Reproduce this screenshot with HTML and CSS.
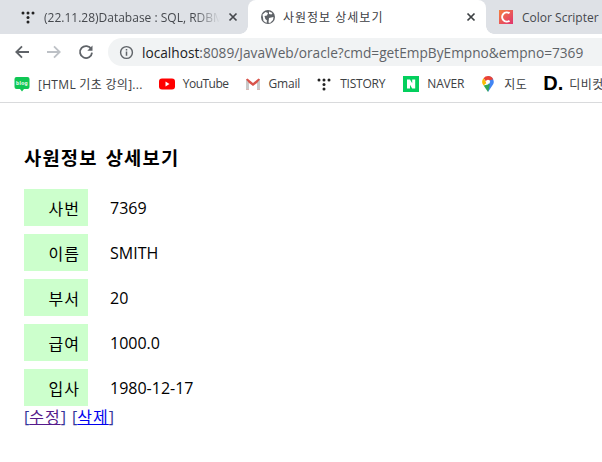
FILE: index.html
```html
<!DOCTYPE html>
<html lang="ko">
<head>
<meta charset="utf-8">
<title>사원정보 상세보기</title>
<link rel="stylesheet" href="styles.css">
</head>
<body>
<header class="browser">
  <div class="tabs">
    <div class="tab first">
      <svg class="fav" viewBox="0 0 16 16"><g fill="#222"><circle cx="3" cy="4" r="1.5"/><circle cx="8" cy="4" r="1.5"/><circle cx="13" cy="4" r="1.5"/><circle cx="8" cy="8.5" r="1.5"/><circle cx="8" cy="13" r="1.5"/></g></svg>
      <span class="tab-title fade">(22.11.28)Database : SQL, RDBMS</span>
      <svg class="close" viewBox="0 0 10 10"><path d="M1.5 1.5l7 7M8.5 1.5l-7 7" stroke="#45484d" stroke-width="1.7" fill="none"/></svg>
    </div>
    <div class="tab active">
      <svg class="fav" viewBox="0 0 16 16"><circle cx="8" cy="8" r="7" fill="#5f6368"/><path d="M2.500 5.500l3-2.500 2.500 1-1 2.500-2.500.5.800 3 1.700 1.500-.5 2.500-3-2zM9 2.500l3.500 1.500-1 1.500-2.500-.5zM9 9l4.500-1-.5 3-3 3-1.500-.5z" fill="#fff"/></svg>
      <span class="tab-title ko">사원정보 상세보기</span>
      <svg class="close" viewBox="0 0 10 10"><path d="M1.500 1.500l7 7M8.500 1.500l-7 7" stroke="#3c4043" stroke-width="1.700" fill="none"/></svg>
    </div>
    <div class="tab last">
      <svg class="fav" viewBox="0 0 16 16"><defs><linearGradient id="cs" x1="0" y1="0" x2="1" y2="1"><stop offset="0" stop-color="#f4813f"/><stop offset="1" stop-color="#e0336f"/></linearGradient></defs><rect x="1" y="1" width="14" height="14" fill="url(#cs)"/><path d="M11.500 4.300A4.600 4.600 0 1 0 11.500 11.700" stroke="#fff" stroke-width="2" fill="none"/></svg>
      <span class="tab-title">Color Scripter</span>
    </div>
  </div>
  <div class="toolbar">
    <svg class="nav" viewBox="0 0 16 16"><path d="M15 8H2.500M8 2.300L2.300 8 8 13.700" stroke="#5f6368" stroke-width="1.800" fill="none"/></svg>
    <svg class="nav" viewBox="0 0 16 16"><path d="M1 8h12.500M8 2.300L13.700 8 8 13.700" stroke="#bdc1c6" stroke-width="1.800" fill="none"/></svg>
    <svg class="nav" viewBox="0 0 16 16"><path d="M13.300 5.200A6 6 0 1 0 14 8.600" stroke="#5f6368" stroke-width="1.800" fill="none"/><path d="M14.500 1.500v5.200H9.300z" fill="#5f6368"/></svg>
    <div class="omnibox">
      <svg class="info" viewBox="0 0 16 16"><circle cx="8" cy="8" r="6.300" stroke="#5f6368" stroke-width="1.500" fill="none"/><path d="M7.200 7h1.600v4.500H7.200zM7.200 4.300h1.600v1.600H7.200z" fill="#5f6368"/></svg>
      <span class="url"><span class="host">localhost</span>:8089/JavaWeb/oracle?cmd=getEmpByEmpno&amp;empno=7369</span>
    </div>
  </div>
  <nav class="bookmarks">
    <a class="bm ko first-bm"><svg class="fav" viewBox="0 0 16 16"><path d="M2.500 1h11A2 2 0 0 1 15.500 3v8a2 2 0 0 1-2 2H10l-2 2.500L6 13H2.500a2 2 0 0 1-2-2V3a2 2 0 0 1 2-2z" fill="#0fc754"/><text x="8" y="9.300" class="blog">blog</text></svg>[HTML 기초 강의]...</a>
    <a class="bm narrow"><svg class="fav" viewBox="0 0 16 16"><rect y="2.500" width="16" height="11" rx="3" fill="#f00"/><path d="M6.500 5.500v5l4-2.500z" fill="#fff"/></svg>YouTube</a>
    <a class="bm"><svg class="fav" viewBox="0 0 16 16"><path d="M1 3.500v10h3V7l4 3 4-3v6.500h3v-10l-1.500-1L8 7 2.500 2.500z" fill="#d9534a"/><path d="M4 7v6.500H1V3.500zM12 7v6.500h3V3.500z" fill="#c9c9c9"/></svg>Gmail</a>
    <a class="bm"><svg class="fav" viewBox="0 0 16 16"><g fill="#222"><circle cx="3" cy="4" r="1.500"/><circle cx="8" cy="4" r="1.500"/><circle cx="13" cy="4" r="1.500"/><circle cx="8" cy="8.500" r="1.500"/><circle cx="8" cy="13" r="1.500"/></g></svg>TISTORY</a>
    <a class="bm naver"><svg class="fav" viewBox="0 0 16 16"><rect width="16" height="16" fill="#03cf5d"/><path d="M4 3.500h3l2.200 3.700V3.500h3v9h-3L7 8.800v3.700H4z" fill="#fff"/></svg>NAVER</a>
    <a class="bm ko"><svg class="fav" viewBox="0 0 16 16"><path d="M8 0A5.800 5.800 0 0 1 13.800 5.800c0 1.500-.6 2.500-1.300 3.500L8 16z" fill="#4285f4"/><path d="M8 0A5.800 5.800 0 0 0 3.500 2.200L6 5.500 13.200 3.300A5.800 5.800 0 0 0 8 0z" fill="#ea4335"/><path d="M3.500 2.200A5.800 5.800 0 0 0 3.600 9.500L6.500 7z" fill="#fbbc04"/><path d="M3.600 9.500L8 16l2-8z" fill="#34a853"/><circle cx="8" cy="5.800" r="2.100" fill="#fff"/></svg>지도</a>
    <a class="bm ko"><span class="dlogo">D.</span>디비컷</a>
  </nav>
</header>
<main class="page">
  <h2 class="heading">사원정보 상세보기</h2>
  <table class="emp">
    <tr><th>사번</th><td>7369</td></tr>
    <tr><th>이름</th><td>SMITH</td></tr>
    <tr><th>부서</th><td>20</td></tr>
    <tr><th>급여</th><td>1000.0</td></tr>
    <tr><th>입사</th><td>1980-12-17</td></tr>
  </table>
  <div class="actions">[<a class="visited" href="#">수정</a>] [<a href="#">삭제</a>]</div>
</main>
</body>
</html>
```
FILE: styles.css
```css
* { box-sizing: border-box; }
html, body { margin: 0; padding: 0; }
body {
  width: 602px;
  height: 462px;
  overflow: hidden;
  background: #fff;
  color: #000;
  font-family: "Open Sans", "Noto Sans CJK KR", sans-serif;
}
.browser { height: 103px; border-bottom: 1px solid #d9dadc; overflow: hidden; }
.tabs { display: flex; height: 34px; background: #dee1e6; }
.tab {
  display: flex;
  align-items: center;
  height: 34px;
  min-width: 0;
  padding: 0 10px 0 12px;
  font-size: 12px;
  color: #45484d;
}
.tab.first { flex: 0 0 248px; padding-left: 20px; }
.tab.active {
  flex: 0 0 238px;
  position: relative;
  background: #fff;
  color: #3c4043;
  border-radius: 8px 8px 0 0;
}
.tab.active::before,
.tab.active::after {
  content: "";
  position: absolute;
  bottom: 0;
  width: 8px;
  height: 8px;
}
.tab.active::before { left: -8px; background: radial-gradient(circle at 0 0, transparent 7.5px, #fff 8px); }
.tab.active::after { right: -8px; background: radial-gradient(circle at 100% 0, transparent 7.5px, #fff 8px); }
.tab.last { flex: 0 0 auto; white-space: nowrap; }
.fav { width: 16px; height: 16px; flex: none; margin-right: 8px; }
.blog { font: bold 5px "Liberation Sans", sans-serif; fill: #fff; text-anchor: middle; }
.tab-title { flex: 1; min-width: 0; overflow: hidden; white-space: nowrap; }
.tab-title.ko { margin-left: -1px; letter-spacing: 1px; }
.fade { -webkit-mask-image: linear-gradient(90deg, #000 85%, transparent); mask-image: linear-gradient(90deg, #000 85%, transparent); }
.close { width: 10px; height: 10px; flex: none; margin-left: 8px; }
.toolbar { display: flex; align-items: center; height: 32px; padding: 4px 0 0 14px; gap: 16px; }
.nav { width: 16px; height: 16px; flex: none; }
.omnibox {
  flex: 1;
  display: flex;
  align-items: center;
  height: 28px;
  margin-left: -2px;
  padding-left: 11px;
  background: #f1f3f4;
  border-radius: 14px 0 0 14px;
  font-size: 13.7px;
  color: #5f6368;
  white-space: nowrap;
  overflow: hidden;
}
.info { width: 15px; height: 15px; margin-right: 8px; flex: none; }
.host { color: #202124; }
.bookmarks {
  display: flex;
  align-items: center;
  height: 36px;
  padding: 0 0 1px 14px;
  gap: 16px;
  font-size: 12px;
  color: #3c4043;
  white-space: nowrap;
}
.bm { display: flex; align-items: center; letter-spacing: -0.2px; }
.bm.ko { letter-spacing: 0.5px; }
.bm.first-bm { letter-spacing: 0.3px; }
.bm.narrow { letter-spacing: -0.5px; }
.bm.naver { margin-left: 2px; }
.dlogo { font: bold 20px "Liberation Sans", sans-serif; color: #000; margin-right: 6px; letter-spacing: 0; }
.page { padding: 0 24px; }
.heading { margin: 43px 0 0; height: 24px; line-height: 24px; font-size: 18.72px; font-weight: 700; letter-spacing: 1.2px; word-spacing: 2px; }
.emp { border-collapse: separate; border-spacing: 0 8px; margin-top: 11px; font-size: 16px; }
.emp th { width: 64px; height: 37px; padding: 0 8px 0 0; background: #ccffcc; text-align: right; font-weight: 400; letter-spacing: 1px; }
.emp td { padding: 0 0 0 22px; }
.actions { margin-top: -8px; font-size: 16px; line-height: 22px; color: #333399; word-spacing: 2px; }
.actions a { color: #0000ee; letter-spacing: 1px; }
.actions a.visited { color: #551a8b; }
```
